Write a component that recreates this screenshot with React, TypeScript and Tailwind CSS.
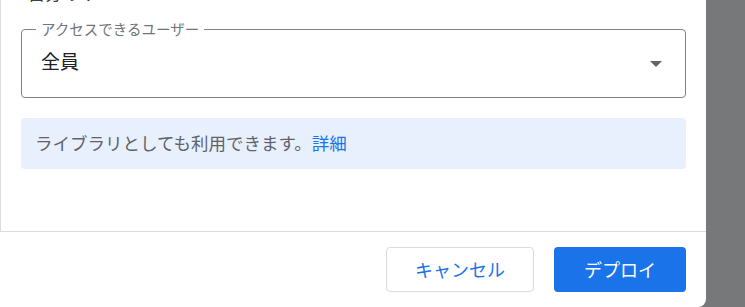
export default function App() {
  return (
    <div
      className="flex h-[307px] w-[745px] overflow-hidden bg-[#777879]"
      style={{ fontFamily: '"Noto Sans CJK JP", "Noto Sans", sans-serif' }}
    >
      <div className="flex h-full w-[706px] flex-col rounded-br-[8px] bg-white">
        {/* scrolling content */}
        <div className="h-[232px] overflow-hidden border-b border-l border-[#dadce0]">
          <div className="mt-[-16px] ml-[27px] h-[18px] text-[17px] leading-[18px] text-[#3c4043]">
            自分のみ
          </div>

          {/* outlined select */}
          <div className="relative mt-[27px] ml-[20px] flex h-[69px] w-[665px] items-center justify-between rounded-[4px] border border-[#7f8389] pr-[23px] pl-[19px]">
            <span className="absolute top-[-11px] left-[14px] bg-white px-[5px] text-[14.5px] leading-[20px] text-[#70757a]">
              アクセスできるユーザー
            </span>
            <span className="pb-[5px] text-[19px] leading-[24px] text-[#202124]">全員</span>
            <svg width="12" height="6" viewBox="0 0 12 6" className="mt-[1px]">
              <path d="M0 0h12L6 6z" fill="#5f6368" />
            </svg>
          </div>

          {/* info banner */}
          <div className="mt-[20px] ml-[20px] flex h-[51px] w-[665px] items-center rounded-[4px] bg-[#e8f0fe] pl-[14px] text-[17.5px] text-[#5f6368]">
            ライブラリとしても利用できます。
            <a className="text-[#1a73e8]">詳細</a>
          </div>
        </div>

        {/* footer */}
        <div className="flex justify-end gap-[20px] pt-[15px] pr-[20px]">
          <button className="flex h-[45px] w-[148px] items-center justify-center rounded-[4px] border border-[#dadce0] bg-white text-[18px] text-[#1a73e8]">
            キャンセル
          </button>
          <button className="flex h-[45px] w-[132px] items-center justify-center rounded-[4px] bg-[#1a73e8] text-[18px] text-white">
            デプロイ
          </button>
        </div>
      </div>
    </div>
  );
}
